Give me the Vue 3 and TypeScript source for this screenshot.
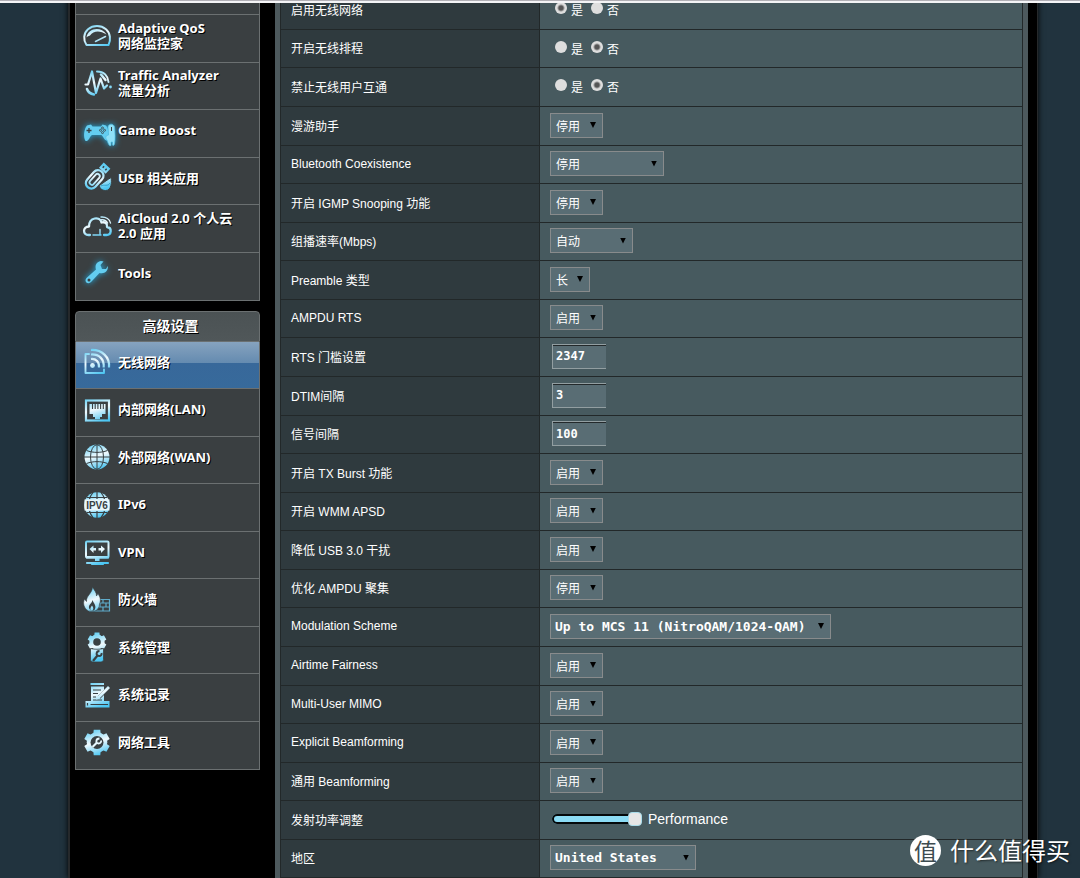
<script setup lang="ts">
import { ref } from 'vue'

interface MenuItem {
  lines: string[]
  icon: string
  active?: boolean
}

interface Row {
  id: string
  label: string
  kind: 'radio' | 'select' | 'text' | 'slider'
  value: string
  size?: string
}

const gearPath = (cx: number, cy: number, r: number, teeth: number, tooth: number): string => {
  const pts: string[] = []
  for (let i = 0; i < teeth; i++) {
    const a = (i / teeth) * Math.PI * 2 - Math.PI / 2
    const steps: [number, number][] = [[-0.38, r], [-0.25, r + tooth], [0.25, r + tooth], [0.38, r]]
    for (const [d, rad] of steps) {
      pts.push(`${(cx + Math.cos(a + d) * rad).toFixed(2)} ${(cy + Math.sin(a + d) * rad).toFixed(2)}`)
    }
  }
  return `M${pts.join('L')}Z`
}

const line = 'fill="none" stroke="url(#ice)" stroke-linecap="round" stroke-linejoin="round"'
const fill = 'fill="url(#ice)"'
const ink = '#394043'

const icons: Record<string, string> = {
  gauge: `<path ${line} stroke-width="2" d="M5.5 25C2 20 2.500 13 7 9.200C12 5 20 5 25 9.200C29.500 13 30 20 27.500 25Z"/><path ${fill} d="M5.500 17.500C6.500 8 20 5.500 25.500 14.500C19 10 12.500 10.500 9 15.500C7.500 16 6.500 16.500 5.500 17.500Z"/><path ${line} stroke-width="1.500" d="M14.500 21.500L24.500 16.500"/>`,
  traffic: `<path ${line} stroke-width="2" d="M16 4.500C23 4.500 27 9 27.500 15"/><path ${line} stroke-width="2.500" d="M20 7.500L24.500 13M6 22C7 25 10 27 13 27.500"/><path ${line} stroke-width="2.200" d="M4.500 17.500H7L11 4.500L15 26L19.500 11.500L23 21.500L26 18.500"/><circle ${fill} cx="29.500" cy="20" r="1.400"/>`,
  game: `<path fill="#63cdf0" d="M6 10.500L10 9.500L11.500 11.500H20L21.500 9.500L25 10.500C28 14 28.500 22 27 25C24 27 22 21 20.500 20H11C9 21 7.500 27 4.500 26C2 22 3 14 6 10.500Z"/><path stroke="${ink}" stroke-width="1.300" fill="none" d="M5.500 15.500H10.500M8 13V18"/><g fill="none" stroke="${ink}" stroke-width=".8"><circle cx="21.500" cy="13" r="1"/><circle cx="19.500" cy="15.300" r="1"/><circle cx="23.500" cy="15.300" r="1"/><circle cx="21.500" cy="17.600" r="1"/></g><path fill="#8fe0f7" stroke="#50bce0" stroke-width=".7" d="M27 12C27.500 8.500 32.500 8 33.500 12C34 18 34.500 24 33.500 29Q32.500 31.500 31.500 30V27H30V30.500Q28.500 31.500 27.500 29C26.500 27 26.500 25.500 25 23.500C24 21 26 20.500 27.500 20Z"/><path stroke="${ink}" d="M30.500 12V16"/>`,
  usb: `<g transform="rotate(42 14 17)"><rect ${line} stroke-width="2.200" x="8.500" y="7" width="11" height="21" rx="5.500"/><rect ${line} stroke-width="1.800" x="11.700" y="11" width="4.600" height="13" rx="2.300"/><path ${fill} d="M9.500 -1H18.500V6H9.500Z"/><path fill="${ink}" d="M11.500 1.500H13V3.500H11.500ZM15 1.500H16.500V3.500H15Z"/></g><path ${fill} stroke="${ink}" stroke-width="1" d="M18.500 23.500C21 21.500 27 17.500 30 15.500C31 20 30.500 28.500 24.500 28.500C20.500 28.500 18.500 26 18.500 23.500Z"/><path fill="none" stroke="#319fc9" d="M20 24C23 22 27 25 29 21"/>`,
  cloud: `<path ${line} stroke-width="2.300" d="M9 25H7.500C1.500 25 1.500 16.500 8 16.500C8 7 19 6 20.500 12.500C24.500 11.500 26.500 13.500 26 17C31.500 18 30.500 25 25.500 25H23"/><path ${line} stroke-width="1.400" d="M20 7C25 6.500 29 9.500 29.500 13M20.500 9.800C23.500 9.500 25.500 11 26.500 13"/><path ${line} stroke-width="1.400" d="M12 25H20M19 24V19.500"/>`,
  wrench: `<path fill="#63cdf0" d="M20 3L22.500 3.500L19.500 7L21 11L25 11L26.800 8C27.500 13 23.500 16.500 18.500 15L10.500 23.500C7 27.500 2.500 23.500 5.500 20L15 11.500C13.500 7 16 3.500 20 3Z"/><circle cx="8" cy="22" r="1.500" fill="${ink}"/>`,
  wifi: `<path ${line} stroke-width="1.900" d="M8 8H4.500V27H23V23.500"/><circle ${fill} cx="11.500" cy="19.500" r="2.400"/><path fill="none" stroke="url(#ice)" stroke-width="2.200" d="M10 13C15 12.500 18.500 16 18 21.500M10 8.500C18 8 23.500 13 22.700 21.500M10 4C21 3.500 29 11 28 21.500"/>`,
  lan: `<rect fill="none" stroke="url(#ice)" stroke-width="2.200" x="5" y="6.500" width="23" height="20"/><path ${fill} d="M8.500 10H24.500V20H21V23H19V25H14V23H12V20H8.500Z"/><path stroke="${ink}" stroke-width="1.100" d="M11.500 10V15M14.200 10V15M16.900 10V15M19.600 10V15M22.300 10V15"/>`,
  globe: `<circle ${fill} cx="16" cy="16" r="12.500"/><g fill="none" stroke="${ink}" stroke-width="1"><path d="M16 3V29M3 16H29M5.500 9.500C12 12 20 12 26.500 9.500M5.500 22.500C12 20 20 20 26.500 22.500"/><ellipse cx="16" cy="16" rx="6.500" ry="12.300"/></g>`,
  ipv6: `<circle ${fill} cx="16" cy="16" r="12.800"/><g fill="none" stroke="${ink}" stroke-width="1.200"><path d="M16 3V10M16 22V29M6 8.500H26M6 23.500H26M12 3.500C10 6 9 8 8.500 10M20 3.500C22 6 23 8 23.500 10M12 28.500C10 26 9 24 8.500 22M20 28.500C22 26 23 24 23.500 22"/></g><rect fill="#e9f7fc" x="3.500" y="10.500" width="25" height="11"/><text x="16" y="20" text-anchor="middle" font-family="Liberation Sans, sans-serif" font-size="10" font-weight="bold" fill="${ink}">IPV6</text>`,
  vpn: `<rect ${line} stroke-width="2" x="5" y="5.500" width="22.500" height="16" rx="1"/><path ${fill} d="M5 20H28V22.500H5ZM14 22H18.500V25H14Z"/><path ${line} stroke-width="2.200" d="M6 27H27M11 28H22"/><path ${fill} d="M8.500 13L12.500 9.500V12H15V14.500H12.500V17ZM24 13L20 9.500V12H17.500V14.500H20V17Z"/>`,
  fire: `<path fill="none" stroke="#5faccb" stroke-width="1.200" d="M16 15.500H28.500V27H8M17 19H28.500M14 23H28.500M22 15.500V19M25 19V23M19 19V23M22 23V27"/><path fill="url(#ice)" stroke="${ink}" stroke-width=".6" d="M11.500 3C13.500 7 15.500 8 15.500 12L17 9.500C19.500 14 20 16 18.500 20C18.500 24 16 26 14 27H7.500C3 24.500 1.500 19.500 3.500 15L5.500 17.500C5 11.500 11 10 11.500 3Z"/><path fill="${ink}" d="M11.500 16C13 20 16 22 13.500 26C10 28 6.500 24.500 8.500 21C9.500 19.500 11 18.500 11.500 16Z"/><path ${fill} d="M11 21.500C13 24 12.500 26.500 10.500 26.500C8.500 26 9.500 23.500 11 21.500Z"/>`,
  admin: `<path ${fill} d="${gearPath(16, 11, 7.3, 6, 2.4)}"/><circle ${fill} cx="16" cy="11" r="7.600"/><circle cx="16" cy="11" r="3.800" fill="${ink}"/><path ${fill} stroke="${ink}" stroke-width=".8" d="M9.500 17.500C12.500 18.500 19.500 18.500 22.500 17.500V28.500Q22.500 31 20 31H12Q9.500 31 9.500 28.500Z"/><path fill="none" stroke="${ink}" stroke-width="2.300" d="M12 30L16.500 24.500"/><path fill="none" stroke="${ink}" stroke-width="2" d="M18.500 20C15 20 14.500 25 18 25C20 25 21 23.500 20.500 22"/>`,
  log: `<path ${fill} d="M9.500 4H23V6H9.500ZM10 7.500H23V22H28.500V28.500H4.500V22H10Z"/><path fill="none" stroke="${ink}" stroke-width="1.200" d="M12 11H20M12 14.500H17M12 18H15M12 21H21M9.500 25.500H27M6.500 24V26.500"/><path stroke="${ink}" stroke-width="3.500" d="M27.500 9L18 18.500"/><path ${fill} d="M27 7L29 9L19 19L15 21L17 17Z"/>`,
  gear: `<path ${fill} d="${gearPath(16, 15.5, 9.8, 6, 3.4)}"/><circle ${fill} cx="16" cy="15.500" r="10.300"/><circle cx="16" cy="15.500" r="6.500" fill="${ink}"/><path fill="none" stroke="#e8f8fd" stroke-width="2.200" d="M11.500 20L16 15.500"/><path fill="none" stroke="#e8f8fd" stroke-width="1.800" d="M18.500 11.500C14.500 11.500 14.500 16.500 17.500 16.500C19.500 16.500 20.500 15 20 13.500"/>`,
}

const general: MenuItem[] = [
  { lines: ['Adaptive QoS', '网络监控家'], icon: 'gauge' },
  { lines: ['Traffic Analyzer', '流量分析'], icon: 'traffic' },
  { lines: ['Game Boost'], icon: 'game' },
  { lines: ['USB 相关应用'], icon: 'usb' },
  { lines: ['AiCloud 2.0 个人云', '2.0 应用'], icon: 'cloud' },
  { lines: ['Tools'], icon: 'wrench' },
]

const advanced: MenuItem[] = [
  { lines: ['无线网络'], icon: 'wifi', active: true },
  { lines: ['内部网络(LAN)'], icon: 'lan' },
  { lines: ['外部网络(WAN)'], icon: 'globe' },
  { lines: ['IPv6'], icon: 'ipv6' },
  { lines: ['VPN'], icon: 'vpn' },
  { lines: ['防火墙'], icon: 'fire' },
  { lines: ['系统管理'], icon: 'admin' },
  { lines: ['系统记录'], icon: 'log' },
  { lines: ['网络工具'], icon: 'gear' },
]

const rows = ref<Row[]>([
  { id: 'radio', label: '启用无线网络', kind: 'radio', value: '是' },
  { id: 'sched', label: '开启无线排程', kind: 'radio', value: '否' },
  { id: 'isolate', label: '禁止无线用户互通', kind: 'radio', value: '否' },
  { id: 'roaming', label: '漫游助手', kind: 'select', value: '停用' },
  { id: 'btcoex', label: 'Bluetooth Coexistence', kind: 'select', value: '停用', size: 'wide' },
  { id: 'igmp', label: '开启 IGMP Snooping 功能', kind: 'select', value: '停用' },
  { id: 'mrate', label: '组播速率(Mbps)', kind: 'select', value: '自动', size: 'medium' },
  { id: 'preamble', label: 'Preamble 类型', kind: 'select', value: '长', size: 'tiny' },
  { id: 'ampdu', label: 'AMPDU RTS', kind: 'select', value: '启用' },
  { id: 'rts', label: 'RTS 门槛设置', kind: 'text', value: '2347' },
  { id: 'dtim', label: 'DTIM间隔', kind: 'text', value: '3' },
  { id: 'beacon', label: '信号间隔', kind: 'text', value: '100' },
  { id: 'txburst', label: '开启 TX Burst 功能', kind: 'select', value: '启用' },
  { id: 'wmm', label: '开启 WMM APSD', kind: 'select', value: '启用' },
  { id: 'usb3', label: '降低 USB 3.0 干扰', kind: 'select', value: '启用' },
  { id: 'aggr', label: '优化 AMPDU 聚集', kind: 'select', value: '停用' },
  { id: 'modulation', label: 'Modulation Scheme', kind: 'select', value: 'Up to MCS 11 (NitroQAM/1024-QAM)', size: 'full' },
  { id: 'airtime', label: 'Airtime Fairness', kind: 'select', value: '启用' },
  { id: 'mumimo', label: 'Multi-User MIMO', kind: 'select', value: '启用' },
  { id: 'explicit', label: 'Explicit Beamforming', kind: 'select', value: '启用' },
  { id: 'implicit', label: '通用 Beamforming', kind: 'select', value: '启用' },
  { id: 'power', label: '发射功率调整', kind: 'slider', value: '100' },
  { id: 'region', label: '地区', kind: 'select', value: 'United States', size: 'region' },
])
</script>

<template>
  <div class="page">
    <svg class="defs" aria-hidden="true">
      <defs>
        <linearGradient id="ice" gradientUnits="userSpaceOnUse" x1="8" y1="3" x2="16" y2="29">
          <stop offset="0" stop-color="#5fcdf3" />
          <stop offset=".5" stop-color="#f0f9fd" />
          <stop offset="1" stop-color="#4cc6f2" />
        </linearGradient>
      </defs>
    </svg>
    <div class="topbar"></div>
    <div class="shell">
      <nav class="sidebar">
        <ul class="menu general">
          <li class="cut"></li>
          <li v-for="m in general" :key="m.icon">
            <a href="#">
              <svg class="icon" :class="m.icon" viewBox="0 0 32 32" aria-hidden="true" v-html="icons[m.icon]"></svg>
              <span><template v-for="(l, i) in m.lines" :key="l"><br v-if="i" />{{ l }}</template></span>
            </a>
          </li>
        </ul>
        <h2 class="heading">高级设置</h2>
        <ul class="menu">
          <li v-for="m in advanced" :key="m.icon" :class="{ active: m.active }">
            <a href="#">
              <svg class="icon" viewBox="0 0 32 32" aria-hidden="true" v-html="icons[m.icon]"></svg>
              <span>{{ m.lines[0] }}</span>
            </a>
          </li>
        </ul>
      </nav>
      <main class="panel">
        <table class="settings">
          <tbody>
            <tr v-for="row in rows" :key="row.id">
              <th scope="row">
                <label v-if="row.kind !== 'radio'" :for="row.id">{{ row.label }}</label>
                <span v-else :id="row.id">{{ row.label }}</span>
              </th>
              <td>
                <div v-if="row.kind === 'radio'" class="radios" role="radiogroup" :aria-labelledby="row.id">
                  <label v-for="o in ['是', '否']" :key="o">
                    <input v-model="row.value" type="radio" :name="row.id" :value="o" />{{ o }}
                  </label>
                </div>
                <div v-else-if="row.kind === 'select'" class="select" :class="row.size">
                  <select :id="row.id" v-model="row.value">
                    <option>{{ row.value }}</option>
                  </select>
                </div>
                <input v-else-if="row.kind === 'text'" :id="row.id" v-model="row.value" class="field" type="text" />
                <div v-else class="power">
                  <input :id="row.id" v-model="row.value" type="range" min="0" max="100" />
                  <span>Performance</span>
                </div>
              </td>
            </tr>
          </tbody>
        </table>
      </main>
    </div>
    <div class="brand">
      <span class="seal">值</span>
      <span>什么值得买</span>
    </div>
  </div>
</template>

<style>
body {
  margin: 0;
  background: #21333e;
}
</style>

<style scoped>
* {
  box-sizing: border-box;
}

.page {
  position: relative;
  height: 100vh;
  overflow: hidden;
  padding: 0 42px 0 68px;
  color: #fff;
  font-family: "Liberation Sans", "Noto Sans CJK SC", sans-serif;
  font-size: 12px;
}

.defs {
  position: absolute;
  width: 0;
  height: 0;
}

.topbar {
  position: absolute;
  z-index: 2;
  top: 0;
  left: 0;
  right: 0;
  height: 3px;
  background: #f4f4f6;
  border-top: 1px solid #b2b0b6;
}

.shell {
  display: grid;
  grid-template-columns: 185px 1fr;
  column-gap: 15px;
  margin-top: -9px;
  padding: 0 9px 0 5px;
  background: #000;
  border: solid #26292b;
  border-width: 0 1px 0 2px;
  box-shadow: 0 0 6px #000;
}

.menu {
  margin: 0;
  padding: 0;
  list-style: none;
  border: solid #6b7071;
  border-width: 0 1px 1px;
}

.menu li {
  height: 47px;
  background: #3a3f41;
  border-bottom: 1px solid #6b7071;
}

.menu li:nth-child(even) {
  height: 48px;
}

.menu li:last-child {
  border-bottom: 0;
}

.menu .cut {
  height: 24px;
}

.menu .active {
  background: linear-gradient(#86a3bf, #658bb0 45%, #38689a 45%, #376a9b);
}

.menu a {
  display: grid;
  grid-template-columns: 32px 1fr;
  column-gap: 5px;
  align-items: center;
  height: 100%;
  padding: 0 0 6px 5px;
  color: #fff;
  text-decoration: none;
  font: bold 13px/15px "Noto Sans", "Noto Sans CJK SC", sans-serif;
  text-shadow: 1px 1px 0 #000;
}

.icon {
  width: 32px;
  height: 32px;
  overflow: visible;
  text-shadow: none;
}

.icon.game,
.icon.wrench {
  filter: drop-shadow(0 0 3px #22a8dc);
}

.heading {
  margin: 10px 0 0;
  height: 31px;
  color: #fff;
  background: linear-gradient(#4b5254, #505759);
  border: 1px solid #6b7071;
  border-radius: 4px 4px 0 0;
  font: bold 14px/28px "Noto Sans", "Noto Sans CJK SC", sans-serif;
  text-align: center;
  padding-left: 6px;
  text-shadow: 1px 1px 0 #000;
}

.panel {
  padding: 0 5px;
  background: #4d595d;
}

.settings {
  width: 100%;
  table-layout: fixed;
  border-collapse: separate;
  border-spacing: 0;
  border: solid #222829;
  border-width: 0 1px;
}

.settings tr {
  height: 39px;
}

.settings tr:nth-child(7n + 2),
.settings tr:nth-child(7n + 5),
.settings tr:nth-child(7n) {
  height: 38px;
}

.settings th,
.settings td {
  padding: 0 0 2px 10px;
  border-bottom: 1px solid #222829;
  vertical-align: middle;
}

.settings th {
  width: 259px;
  background: #2f3a3e;
  border-right: 1px solid #222829;
  font-weight: normal;
  text-align: left;
}

.settings td {
  background: #475a5f;
}

.radios {
  display: flex;
  gap: 8px;
  padding: 5px 0 0 5px;
}

.radios label {
  display: flex;
  align-items: flex-start;
  gap: 4px;
  line-height: 19px;
}

.radios input {
  appearance: none;
  width: 12px;
  height: 12px;
  margin: 0;
  border-radius: 50%;
  background: #dedede;
}

.radios input:checked {
  background: radial-gradient(circle, #555 0 2px, #dedede 4px);
}

.select {
  display: grid;
  width: 53px;
}

.select.tiny {
  width: 40px;
}

.select.medium {
  width: 83px;
}

.select.wide {
  width: 114px;
}

.select.region {
  width: 146px;
}

.select.full {
  width: 281px;
}

.select select,
.select::after {
  grid-area: 1 / 1;
}

.select::after {
  content: "";
  align-self: center;
  justify-self: end;
  width: 6px;
  height: 6px;
  margin-right: 7px;
  background: #000;
  clip-path: polygon(0 0, 100% 0, 50% 100%);
  pointer-events: none;
}

.select select {
  appearance: none;
  width: 100%;
  height: 25px;
  margin: 0;
  padding: 0 0 0 5px;
  color: #fff;
  background: #596d74;
  border: 1px solid #888b8c;
  border-radius: 0;
  font: 12px "Noto Sans CJK SC", sans-serif;
}

.select.full select,
.select.region select {
  padding-left: 4px;
  font: bold 13px "DejaVu Sans Mono", monospace;
}

.field {
  display: block;
  width: 54px;
  height: 25px;
  margin: 0 0 0 2px;
  padding: 0 0 0 3px;
  color: #fff;
  background: #596d74;
  border: 0 solid #929ea1;
  border-width: 1px 0 1px 1px;
  box-shadow: inset 0 1px 0 #23292b;
  font: bold 12px "DejaVu Sans Mono", monospace;
}

.power {
  display: flex;
  align-items: center;
  gap: 6px;
  padding-left: 2px;
  font-size: 14px;
  line-height: 18px;
}

.power input {
  appearance: none;
  width: 90px;
  height: 14px;
  margin: 0;
  background: transparent;
}

.power input::-webkit-slider-runnable-track {
  height: 10px;
  background: #8cdcf5;
  box-shadow: inset 0 0 0 2px #05090b;
  border-radius: 5px;
}

.power input::-webkit-slider-thumb {
  appearance: none;
  width: 14px;
  height: 14px;
  margin-top: -2px;
  background: #e6e6e6;
  border: 1px solid #a9dcea;
  border-radius: 4px;
}

.brand {
  position: absolute;
  z-index: 3;
  right: 10px;
  bottom: 12px;
  display: flex;
  align-items: center;
  gap: 9px;
  font: 24px/32px "Noto Sans CJK SC", sans-serif;
  text-shadow: 1px 1px 2px #0008;
}

.seal {
  width: 31px;
  height: 31px;
  border-radius: 50%;
  color: #3d4b50;
  background: #fff;
  font-size: 23px;
  line-height: 30px;
  text-align: center;
  text-shadow: none;
}
</style>
